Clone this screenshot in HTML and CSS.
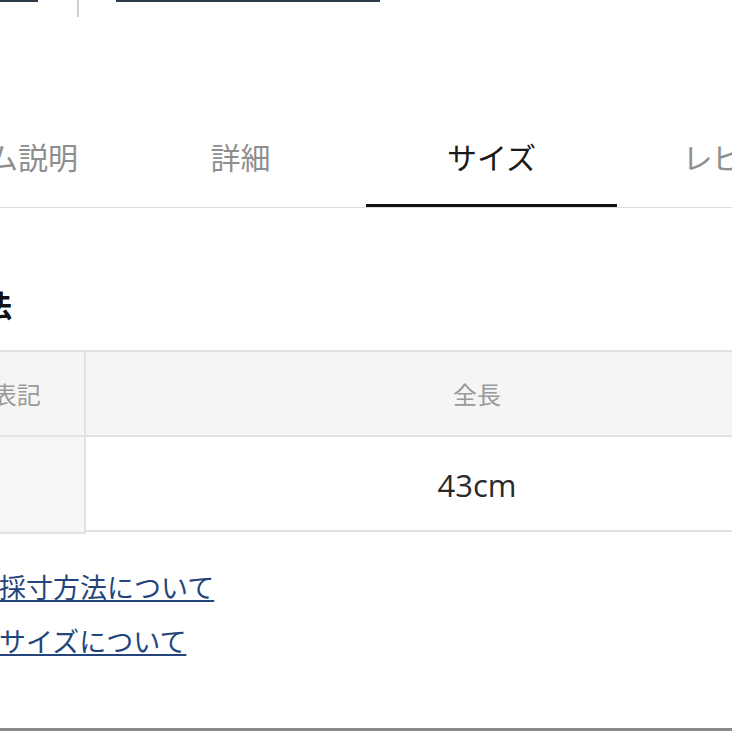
FILE: index.html
```html
<!DOCTYPE html>
<html lang="ja">
<head>
<meta charset="utf-8">
<title>サイズ</title>
<link rel="stylesheet" href="styles.css">
</head>
<body>
<div class="page">
  <div class="topbar">
    <div class="top-btn top-btn-a"></div>
    <div class="top-divider"></div>
    <div class="top-btn top-btn-b"></div>
  </div>
  <nav class="tabs">
    <div class="tab">アイテム説明</div>
    <div class="tab">詳細</div>
    <div class="tab tab-active">サイズ</div>
    <div class="tab">レビュー</div>
  </nav>
  <section class="content">
    <h2 class="heading">寸法</h2>
    <div class="size-table">
      <div class="cell head first">サイズ表記</div>
      <div class="cell head">全長</div>
      <div class="cell body first"></div>
      <div class="cell body value">43cm</div>
    </div>
    <div class="links">
      <a class="link" href="#">採寸方法について</a>
      <a class="link" href="#">サイズについて</a>
    </div>
  </section>
  <div class="footer-line"></div>
</div>
</body>
</html>
```

FILE: styles.css
```css
html, body {
  margin: 0;
  padding: 0;
  background: #ffffff;
  overflow: hidden;
}
body {
  width: 732px;
  height: 732px;
  font-family: "Noto Sans CJK JP", "Noto Sans", sans-serif;
}
.page {
  width: 1004px;
  margin-left: -136px;
}
.topbar {
  display: flex;
  height: 18px;
  padding-left: 136px;
}
.top-btn {
  height: 18px;
  box-sizing: border-box;
  border-top: 2px solid #2d3a4a;
}
.top-btn-a { width: 38px; }
.top-divider {
  width: 2px;
  height: 17px;
  background: #d0d0d0;
  margin-left: 39px;
}
.top-btn-b {
  width: 264px;
  margin-left: 37px;
}
.tabs {
  display: flex;
  margin-top: 118px;
  border-bottom: 1px solid #dcdcdc;
}
.tab {
  width: 251px;
  text-align: center;
  font-size: 30px;
  line-height: 40px;
  color: #8e8e8e;
  padding-bottom: 31px;
}
.tab-active {
  color: #1a1a1a;
  padding-bottom: 28px;
  border-bottom: 3px solid #111111;
}
.content {
  display: flex;
  flex-direction: column;
}
.heading {
  margin: 76px 0 0 0;
  padding-left: 88px;
  font-size: 30px;
  line-height: 40px;
  font-weight: 700;
  color: #111111;
}
.size-table {
  margin-top: 26px;
  margin-left: 14px;
  width: 990px;
  display: grid;
  grid-template-columns: 208px 1fr;
  border-top: 2px solid #e2e2e2;
}
.cell {
  display: flex;
  align-items: center;
  justify-content: center;
  border-bottom: 2px solid #e2e2e2;
}
.cell.first {
  border-right: 2px solid #e2e2e2;
  background: #f6f6f6;
}
.cell.head {
  height: 83px;
  background: #f5f5f5;
  font-size: 24px;
  color: #9a9a9a;
}
.cell.body {
  height: 95px;
}
.cell.value {
  font-family: "Open Sans", "Noto Sans", sans-serif;
  font-size: 31px;
  color: #2a2a2a;
  padding-top: 2px;
  box-sizing: border-box;
}
.links {
  display: flex;
  flex-direction: column;
  align-items: flex-start;
  margin-top: 26px;
  margin-left: 135px;
}
.link {
  font-size: 27px;
  line-height: 54px;
  color: #23457c;
  text-decoration: underline;
  text-decoration-thickness: 2px;
  text-underline-offset: 2px;
}
.footer-line {
  margin-top: 60px;
  height: 3px;
  background: #8a8a8a;
}
```
